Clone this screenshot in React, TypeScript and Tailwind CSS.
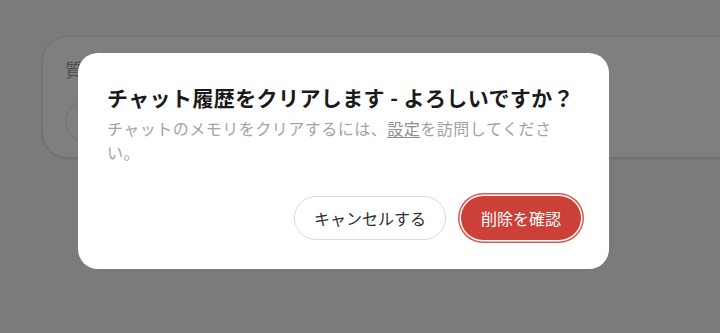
import { Plus } from "lucide-react";

export default function App() {
  return (
    <div className="relative h-[333px] w-[720px] overflow-hidden bg-[#f7f7f7] font-['Noto_Sans_CJK_JP','Noto_Sans',sans-serif]">
      {/* page behind the dialog */}
      <div className="pl-[42px] pt-[36px]">
        <div className="h-[122px] w-[760px] rounded-[26px] border border-[#e6e6e6] bg-white px-[22px] pt-[18px] shadow-sm">
          <p className="text-[18px] leading-[28px] text-[#9a9a9a]">質問を入力してください</p>
          <button className="mt-[18px] flex h-[41px] w-[41px] items-center justify-center rounded-full border border-[#e2e2e2] text-[#333]">
            <Plus className="h-4 w-4" strokeWidth={2} />
          </button>
        </div>
      </div>

      {/* overlay + dialog */}
      <div className="absolute inset-0 bg-black/50 pl-[78px] pt-[53px]">
        <div className="w-[531px] rounded-[20px] bg-white pb-[29px] pl-[29px] pr-[28px] pt-[30px]">
          <h2 className="text-[21px] font-bold leading-[28px] tracking-[0.4px] text-[#1a1a1a]">
            チャット履歴をクリアします - よろしいですか？
          </h2>
          <p className="mt-[5px] text-base leading-6 tracking-[0.5px] text-[#a3a3a3]">
            チャットのメモリをクリアするには、
            <a className="text-[#8f8f8f] underline underline-offset-2">設定</a>
            を訪問してください。
          </p>
          <div className="mt-[32px] flex items-center justify-end gap-[15px]">
            <button className="h-[44px] rounded-full border border-[#dcdcdc] bg-white px-[19px] text-base text-[#2e2e2e]">
              キャンセルする
            </button>
            <button className="h-[44px] rounded-full bg-[#cb4037] px-[20px] text-base text-white ring-[1.5px] ring-[#e0554c] ring-offset-[1.5px]">
              削除を確認
            </button>
          </div>
        </div>
      </div>
    </div>
  );
}
